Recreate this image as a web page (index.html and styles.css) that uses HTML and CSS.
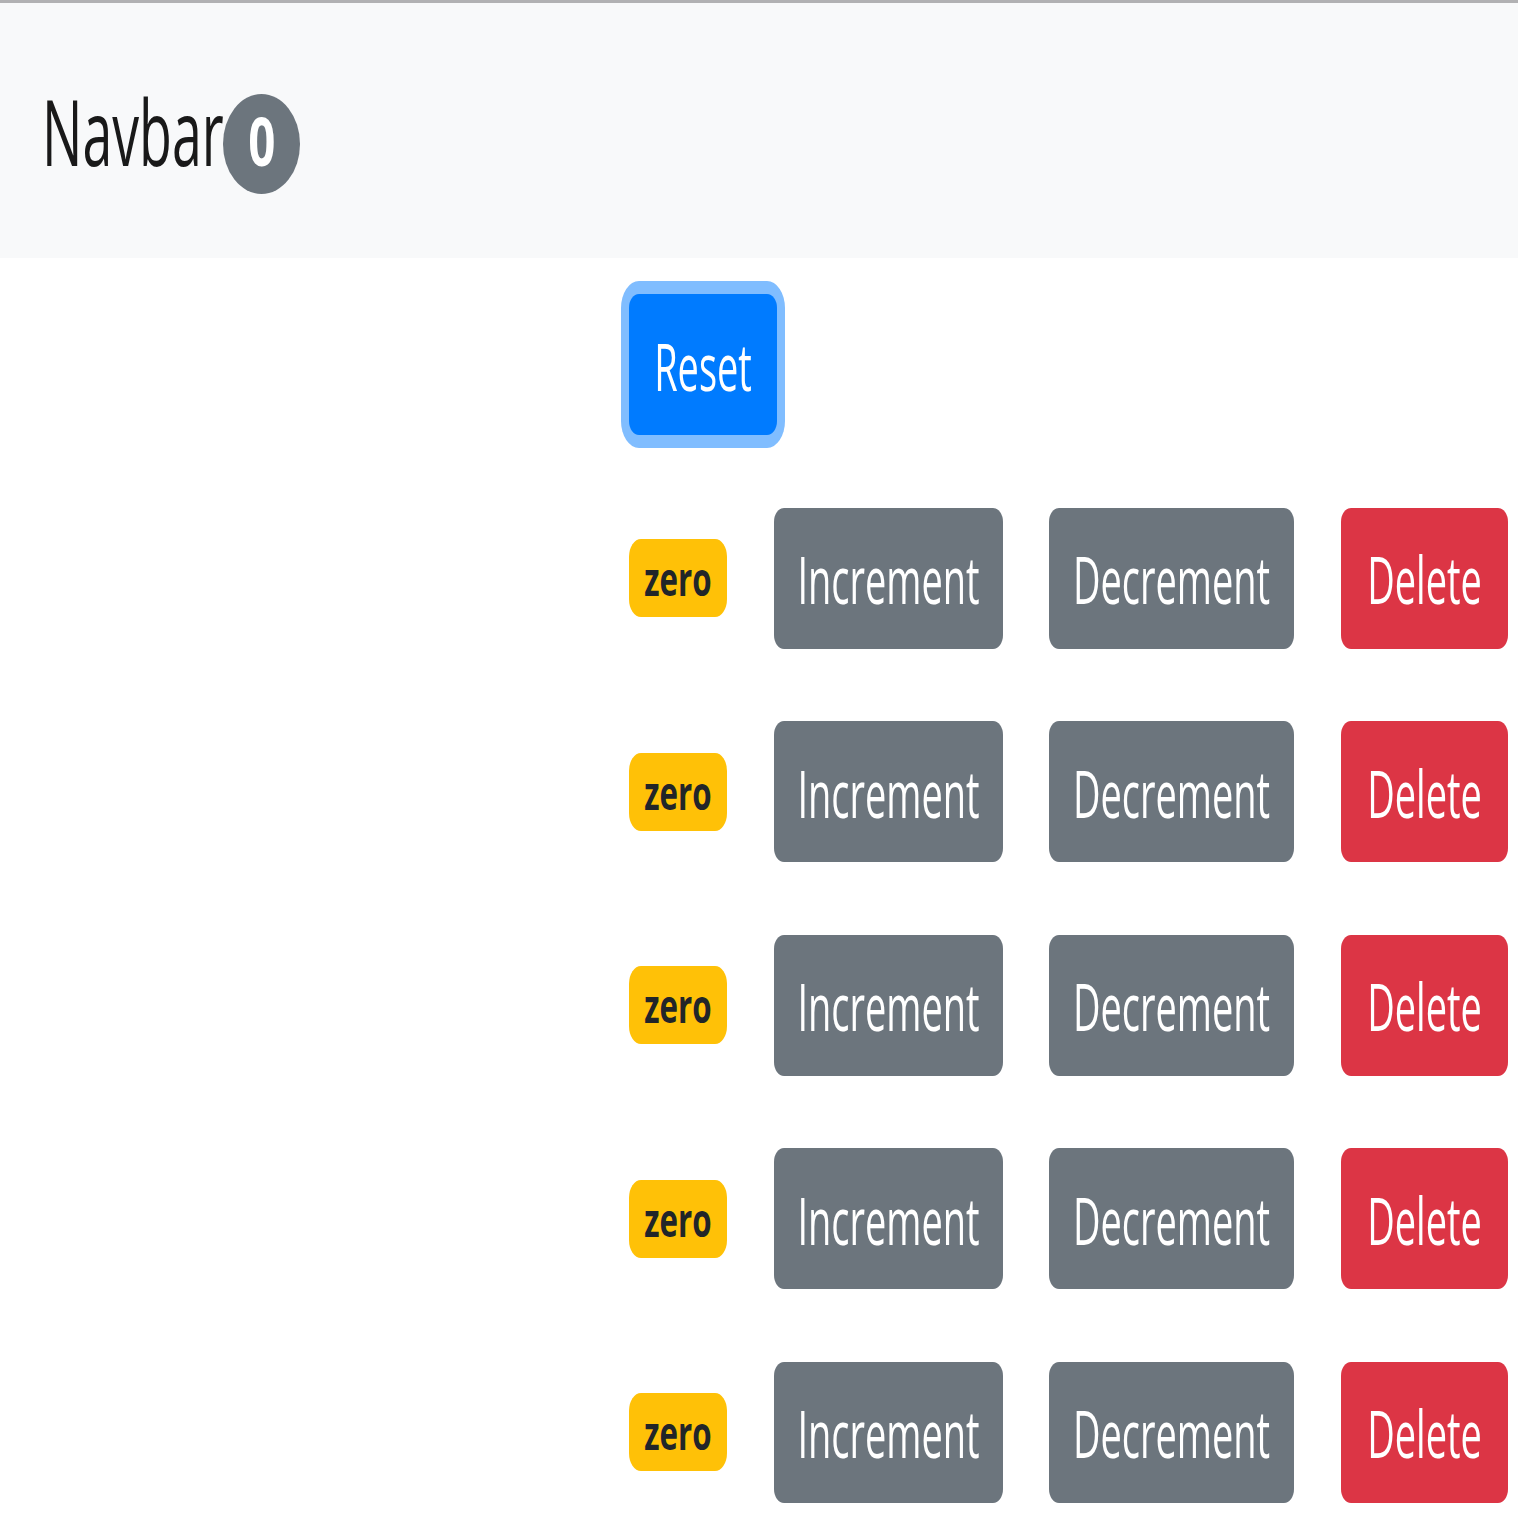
FILE: index.html
```html
<!DOCTYPE html>
<html lang="en">
<head>
<meta charset="utf-8">
<title>Counters</title>
<link rel="stylesheet" href="styles.css">
</head>
<body>
  <nav class="navbar">
    <a class="brand" href="#"><span class="brand-text">Navbar</span><span class="pill"><span class="pill-text">0</span></span></a>
  </nav>
  <main class="counters">
    <div class="focus-ring"><button class="btn btn-primary btn-reset"><span class="lbl">Reset</span></button></div>
    <div class="counter">
      <span class="badge"><span class="badge-text">zero</span></span>
      <button class="btn btn-secondary btn-inc"><span class="lbl">Increment</span></button>
      <button class="btn btn-secondary btn-dec"><span class="lbl">Decrement</span></button>
      <button class="btn btn-danger btn-del"><span class="lbl">Delete</span></button>
    </div>
    <div class="counter">
      <span class="badge"><span class="badge-text">zero</span></span>
      <button class="btn btn-secondary btn-inc"><span class="lbl">Increment</span></button>
      <button class="btn btn-secondary btn-dec"><span class="lbl">Decrement</span></button>
      <button class="btn btn-danger btn-del"><span class="lbl">Delete</span></button>
    </div>
    <div class="counter">
      <span class="badge"><span class="badge-text">zero</span></span>
      <button class="btn btn-secondary btn-inc"><span class="lbl">Increment</span></button>
      <button class="btn btn-secondary btn-dec"><span class="lbl">Decrement</span></button>
      <button class="btn btn-danger btn-del"><span class="lbl">Delete</span></button>
    </div>
    <div class="counter">
      <span class="badge"><span class="badge-text">zero</span></span>
      <button class="btn btn-secondary btn-inc"><span class="lbl">Increment</span></button>
      <button class="btn btn-secondary btn-dec"><span class="lbl">Decrement</span></button>
      <button class="btn btn-danger btn-del"><span class="lbl">Delete</span></button>
    </div>
    <div class="counter">
      <span class="badge"><span class="badge-text">zero</span></span>
      <button class="btn btn-secondary btn-inc"><span class="lbl">Increment</span></button>
      <button class="btn btn-secondary btn-dec"><span class="lbl">Decrement</span></button>
      <button class="btn btn-danger btn-del"><span class="lbl">Delete</span></button>
    </div>
  </main>
</body>
</html>
```

FILE: styles.css
```css
html, body {
  margin: 0;
  padding: 0;
  background: #ffffff;
}

body {
  font-family: "Open Sans", "Noto Sans", sans-serif;
  color: #212529;
}

/* ---------- navbar ---------- */
.navbar {
  height: 255px;
  border-top: 3px solid #b1b1b3;
  background: #f8f9fa;
  padding-left: 42px;
  display: flex;
  align-items: flex-start;
}

.brand {
  display: flex;
  align-items: baseline;
  padding-top: 82.5px;
  color: rgba(0, 0, 0, 0.9);
  font-size: 91px;
  line-height: 91px;
  text-decoration: none;
}

/* text is drawn horizontally condensed, as in the zoomed capture */
.brand-text {
  display: block;
  width: 180px;
  white-space: nowrap;
  transform: scaleX(0.59);
  transform-origin: 0 50%;
}

.pill {
  margin-left: 1px;
  width: 77px;
  height: 100px;
  border-radius: 50%;
  background: #6c757d;
  color: #ffffff;
  font-size: 66px;
  font-weight: 700;
  line-height: 93px;
  display: flex;
  justify-content: center;
  align-items: flex-start;
}

.pill-text {
  display: block;
  transform: scaleX(0.72);
}

/* ---------- counters ---------- */
.counters {
  display: flex;
  flex-direction: column;
  align-items: flex-start;
  gap: 72.5px;
  padding: 36px 0 0 629px;
}

.focus-ring {
  padding: 13px 8px;
  margin: -13px -8px;
  background: #80bdff;
  border-radius: 18px / 27px;
}

.counter {
  display: flex;
  align-items: center;
  gap: 46.5px;
}

.btn {
  height: 141px;
  padding: 0;
  border: 0;
  border-radius: 10px / 14px;
  font-family: "Open Sans", "Noto Sans", sans-serif;
  font-size: 66px;
  font-weight: 400;
  line-height: 1;
  color: #ffffff;
  display: flex;
  align-items: center;
}

.lbl {
  display: flex;
  justify-content: center;
  width: 100%;
  white-space: nowrap;
  transform: scaleX(0.575);
}

.btn-primary { background: #007bff; }
.btn-secondary { background: #6c757d; }
.btn-danger { background: #dc3545; }

.btn-reset { width: 148px; }
.btn-inc { width: 229px; }
.btn-dec { width: 245px; }
.btn-del { width: 167px; }

.badge {
  width: 98px;
  height: 78px;
  border-radius: 12px / 18px;
  background: #ffc107;
  color: #212529;
  font-size: 46px;
  font-weight: 700;
  line-height: 1;
  display: flex;
  align-items: center;
}

.badge-text {
  display: flex;
  justify-content: center;
  width: 100%;
  white-space: nowrap;
  transform: scaleX(0.68);
}
```
